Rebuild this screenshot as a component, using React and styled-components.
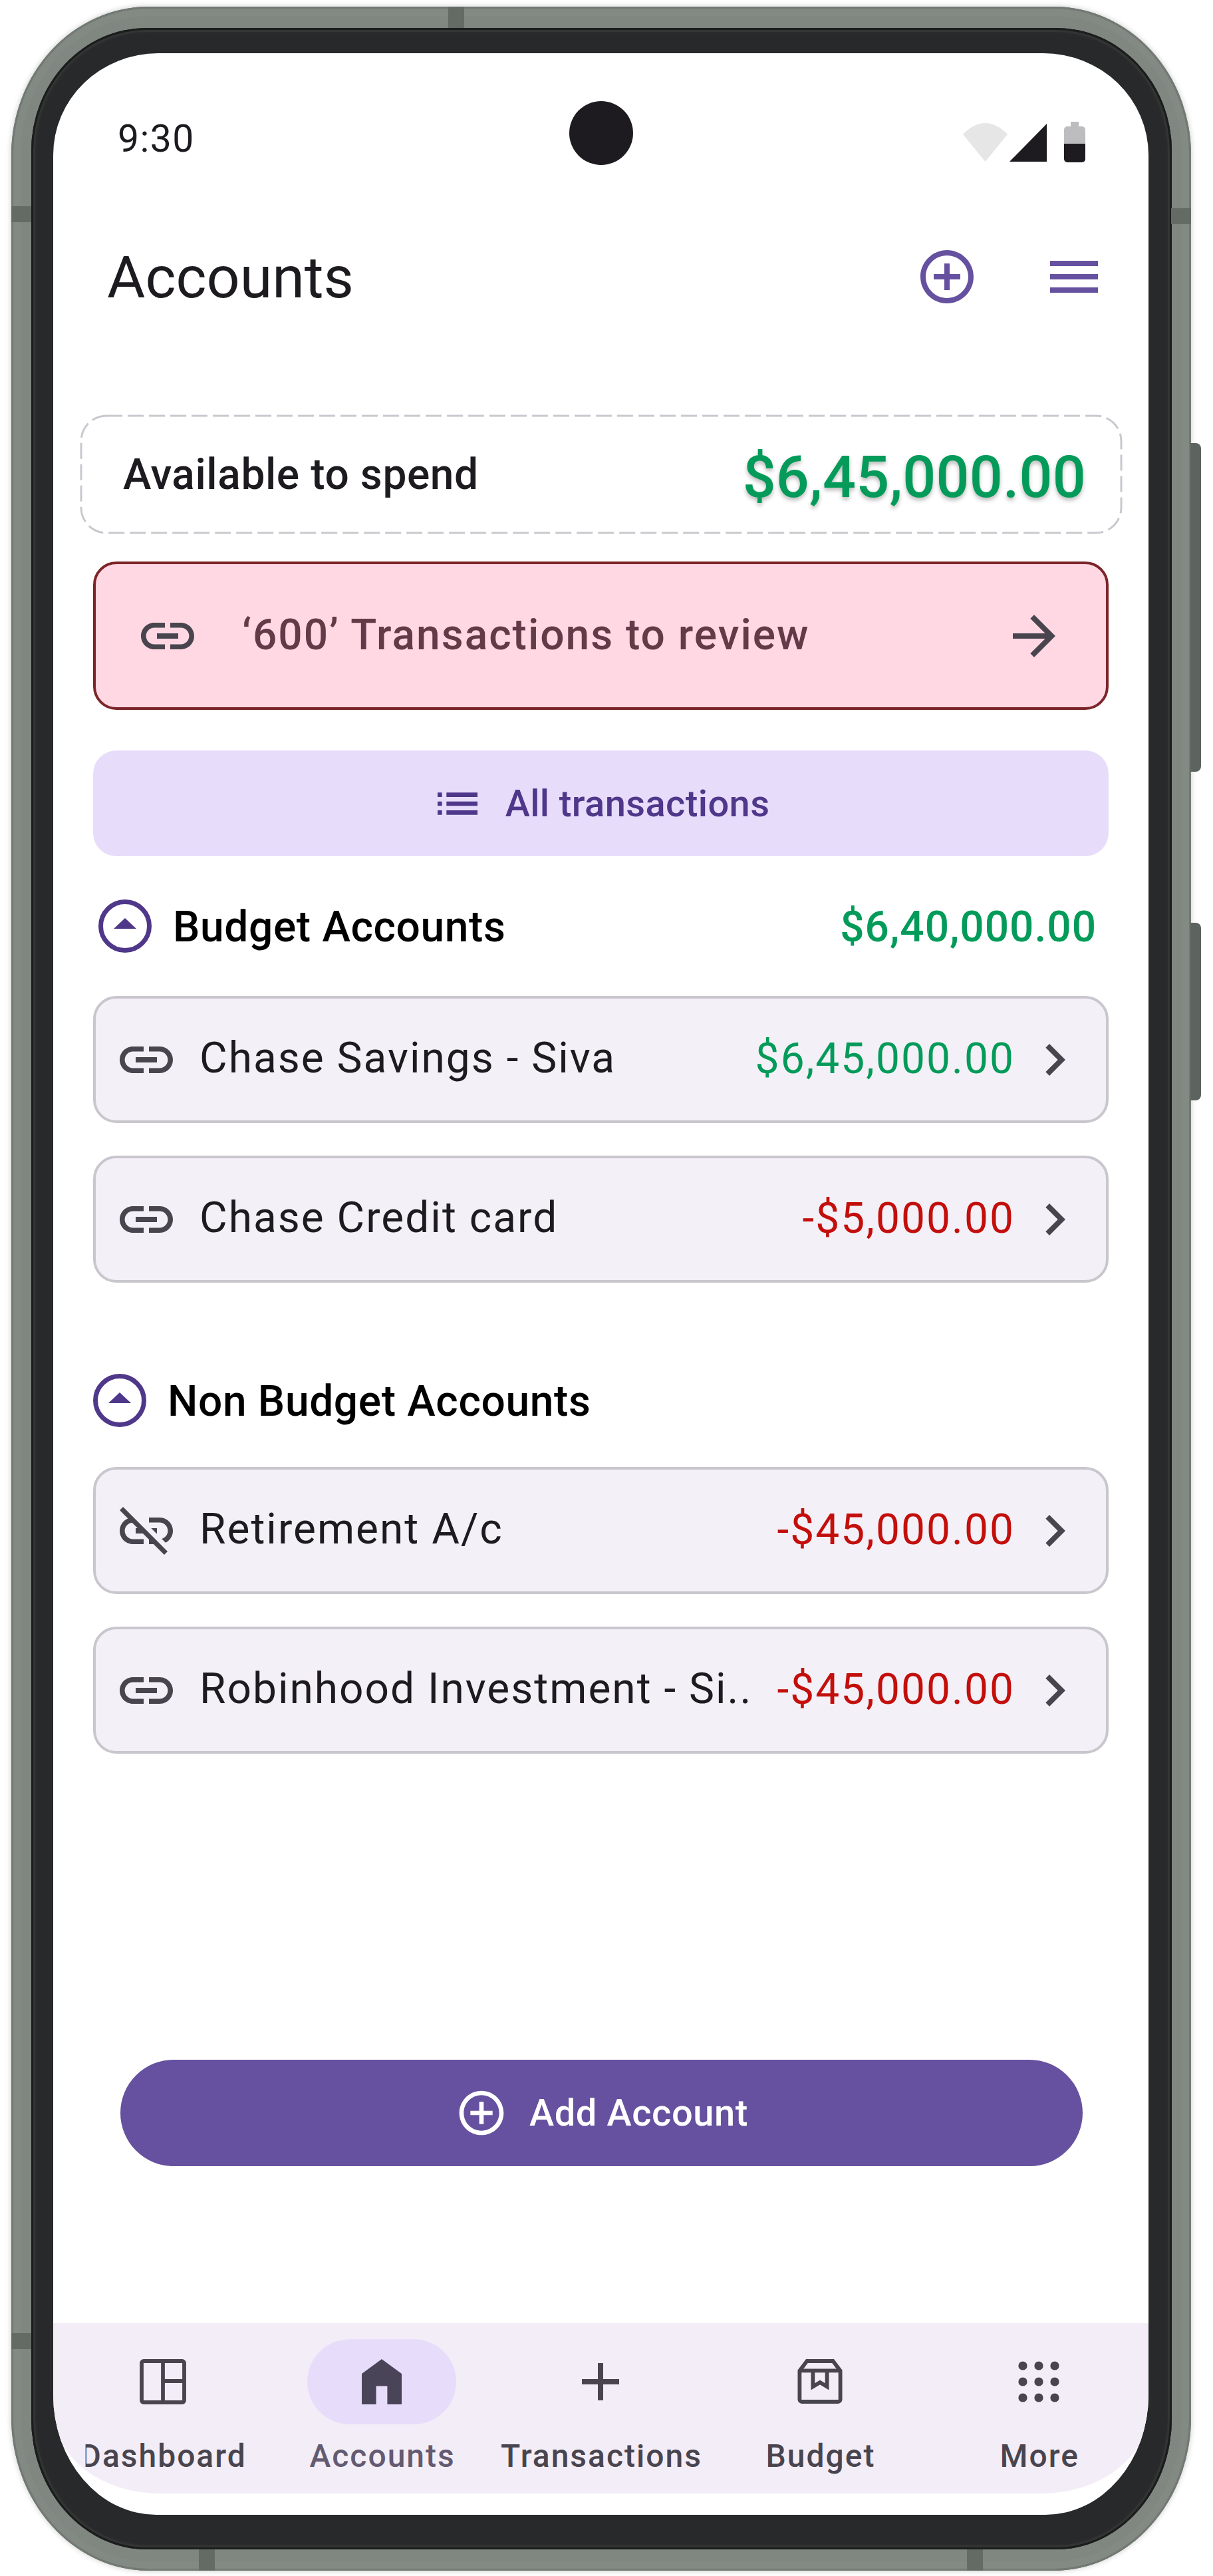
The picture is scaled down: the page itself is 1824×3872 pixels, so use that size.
import React from 'react';
import styled, { createGlobalStyle } from 'styled-components';

const colors = {
  ink: '#1d1b20',
  icon: '#49454f',
  green: '#049b5a',
  red: '#c30f0c',
  primary: '#65519f',
  deepPurple: '#4f378a',
  lilac: '#e7ddfb',
  surface: '#f4f0f7',
  outline: '#c9c6cd',
};

const paths = {
  link: 'M3.9 12c0-1.71 1.39-3.1 3.1-3.1h4V7H7c-2.76 0-5 2.24-5 5s2.24 5 5 5h4v-1.9H7c-1.71 0-3.1-1.39-3.1-3.1zM8 13h8v-2H8v2zm9-6h-4v1.9h4c1.71 0 3.1 1.39 3.1 3.1s-1.39 3.1-3.1 3.1h-4V17h4c2.76 0 5-2.24 5-5s-2.24-5-5-5z',
  linkOff:
    'M17 7h-4v1.9h4c1.71 0 3.1 1.39 3.1 3.1 0 1.43-.98 2.63-2.31 2.98l1.46 1.46C20.88 15.61 22 13.95 22 12c0-2.76-2.24-5-5-5zm-1 4h-2.19l2 2H16zM2 4.27l3.11 3.11C3.29 8.12 2 9.91 2 12c0 2.76 2.24 5 5 5h4v-1.9H7c-1.71 0-3.1-1.39-3.1-3.1 0-1.59 1.21-2.9 2.76-3.07L8.73 11H8v2h2.73L13 15.27V17h1.73l4.01 4L20 19.74 3.27 3 2 4.27z',
  arrow: 'M12 4l-1.41 1.41L16.17 11H4v2h12.17l-5.58 5.59L12 20l8-8z',
  chevron: 'M10 6L8.59 7.41 13.17 12l-4.58 4.59L10 18l6-6z',
  addCircle:
    'M13 7h-2v4H7v2h4v4h2v-4h4v-2h-4V7zm-1-5C6.48 2 2 6.48 2 12s4.48 10 10 10 10-4.48 10-10S17.52 2 12 2zm0 18c-4.41 0-8-3.59-8-8s3.59-8 8-8 8 3.59 8 8-3.59 8-8 8z',
  menu: 'M3 18h18v-2H3v2zm0-5h18v-2H3v2zm0-7v2h18V6H3z',
  list: 'M3 13h2v-2H3v2zm0 4h2v-2H3v2zm0-8h2V7H3v2zm4 4h14v-2H7v2zm0 4h14v-2H7v2zM7 7v2h14V7H7z',
  add: 'M19 13h-6v6h-2v-6H5v-2h6V5h2v6h6v2z',
  home: 'M4.5 20.5V9L12 3.5 19.5 9v11.5h-5.4v-6.9h-4.2v6.9z',
};

const GlobalStyle = createGlobalStyle`
  html, body {
    margin: 0;
    background: #fff;
  }
  * {
    box-sizing: border-box;
  }
  body {
    font-family: Roboto, "Liberation Sans", sans-serif;
    color: ${colors.ink};
  }
`;

const Page = styled.div`
  width: 1824px;
  height: 3872px;
  padding: 10px 33px 8px 17px;
`;

const Phone = styled.div`
  position: relative;
  display: flex;
  height: 100%;
  padding: 32px 29px 32px 30px;
  border-radius: 207px / 223px 223px 231px 231px;
  background: #7f8780;
  box-shadow:
    0 0 8px rgba(0, 0, 0, 0.22),
    inset 0 0 0 3px #727973,
    inset 0 0 0 14px #828a83;
`;

const Seam = styled.span`
  position: absolute;
  background: #646b65;
  ${(p) =>
    p.$edge === 'top' || p.$edge === 'bottom'
      ? `${p.$edge}: 0; left: ${p.$at}px; width: 24px; height: 32px;`
      : `${p.$edge}: 0; top: ${p.$at}px; width: 30px; height: 24px;`}
`;

const SideKey = styled.span`
  position: absolute;
  right: -15px;
  top: ${(p) => p.$top}px;
  width: 16px;
  height: ${(p) => p.$height}px;
  border-radius: 0 8px 8px 0;
  background: #5d635f;
`;

const Bezel = styled.div`
  display: flex;
  flex: 1;
  padding: 38px 35px 52px 33px;
  border-radius: 174px / 185px 185px 197px 197px;
  background: #28292b;
  box-shadow:
    inset 0 0 0 3px #1b1d1c,
    inset 0 0 0 6px #333534,
    inset 0 0 0 9px #2a2b2c;
`;

const Screen = styled.div`
  display: flex;
  flex: 1;
  flex-direction: column;
  overflow: hidden;
  padding-bottom: 32px;
  background: #fff;
  border-radius: 158px 158px 155px 155px / 153px 153px 180px 180px;
`;

const StatusBar = styled.div`
  display: grid;
  grid-template-columns: 1fr 96px 1fr;
  padding: 72px 95px 0;
`;

const Time = styled.span`
  align-self: center;
  margin: 17px 0 0 2px;
  font-size: 57px;
  letter-spacing: 1.5px;
`;

const Camera = styled.span`
  width: 96px;
  height: 96px;
  border-radius: 50%;
  background: ${colors.ink};
`;

const StatusIcons = styled.div`
  display: flex;
  justify-content: flex-end;
  align-items: flex-end;
  align-self: center;
  margin-top: 27px;
`;

const Wifi = styled.svg`
  width: 67px;
  height: 58px;
  margin-bottom: 1px;
`;

const Signal = styled.svg`
  width: 56px;
  height: 57px;
  margin: 0 26px 1px 3px;
`;

const Battery = styled.svg`
  width: 32px;
  height: 61px;
`;

const Header = styled.header`
  display: flex;
  align-items: center;
  height: 100px;
  margin-top: 118px;
  padding: 0 64px 0 81px;
`;

const Title = styled.h1`
  flex: 1;
  margin: 0;
  font-size: 88px;
  font-weight: 400;
`;

const HeaderActions = styled.div`
  display: flex;
  gap: 95px;
`;

const Glyph = styled.svg.attrs({ viewBox: '0 0 24 24' })`
  flex: none;
  width: ${(p) => p.$size || 96}px;
  height: ${(p) => p.$size || 96}px;
  fill: ${(p) => p.$color || colors.icon};
`;

const LineGlyph = styled(Glyph)`
  fill: none;
  stroke: ${colors.icon};
  stroke-width: 1.45;
`;

const Content = styled.main`
  display: flex;
  flex: 1;
  flex-direction: column;
  padding: 0 60px;
`;

const SpendCard = styled.section`
  position: relative;
  display: flex;
  align-items: center;
  justify-content: space-between;
  flex: none;
  height: 180px;
  margin: 157px -21px 0 -20px;
  padding: 0 55px 0 65px;
`;

const DashedOutline = styled.svg`
  position: absolute;
  inset: 0;
  width: 100%;
  height: 100%;
`;

const SpendLabel = styled.span`
  font-size: 64px;
  font-weight: 500;
  letter-spacing: 0.6px;
`;

const SpendAmount = styled.span`
  margin-top: 7px;
  color: ${colors.green};
  font-size: 88px;
  font-weight: 500;
  letter-spacing: 0.2px;
  text-shadow: 0 4px 6px rgba(0, 0, 0, 0.27);
`;

const ReviewBanner = styled.div`
  display: flex;
  align-items: center;
  gap: 63px;
  flex: none;
  height: 223px;
  margin-top: 41px;
  padding: 0 60px;
  border: 4px solid #7c2529;
  border-radius: 35px;
  background: #ffd8e4;
`;

const ReviewText = styled.span`
  flex: 1;
  margin: 0 0 3px 1px;
  color: #633b48;
  font-size: 64px;
  font-weight: 500;
  letter-spacing: 2px;
`;

const AllTransactions = styled.button`
  display: flex;
  align-items: center;
  justify-content: center;
  gap: 32px;
  flex: none;
  height: 159px;
  margin-top: 61px;
  padding: 0 2px 0 0;
  border: 0;
  border-radius: 35px;
  background: ${colors.lilac};
  color: ${colors.deepPurple};
  font: 500 56px Roboto, sans-serif;
  letter-spacing: 0.4px;
`;

const SectionHeader = styled.div`
  display: flex;
  align-items: center;
  gap: 32px;
  flex: none;
  height: 80px;
  margin-top: ${(p) => p.$top}px;
  padding: 0 18px 0 ${(p) => p.$indent}px;
`;

const SectionTitle = styled.h2`
  flex: 1;
  margin: 3px 0 0;
  color: #000;
  font-size: 64px;
  font-weight: 500;
  letter-spacing: 0.65px;
`;

const SectionTotal = styled.span`
  margin-top: 3px;
  color: ${colors.green};
  font-size: 64px;
  font-weight: 500;
  letter-spacing: 1px;
`;

const AccountList = styled.ul`
  display: flex;
  flex-direction: column;
  gap: 49px;
  flex: none;
  margin: ${(p) => p.$top}px 0 0;
  padding: 0;
  list-style: none;
`;

const AccountRow = styled.li`
  display: flex;
  align-items: center;
  height: 191px;
  padding: 0 29px 0 28px;
  border: 4px solid ${colors.outline};
  border-radius: 35px;
  background: ${colors.surface};
`;

const AccountName = styled.span`
  flex: 1;
  margin: 0 0 5px 32px;
  font-size: 64px;
  letter-spacing: 2px;
  white-space: nowrap;
`;

const AccountAmount = styled.span`
  margin: 0 12px 3px 0;
  color: ${(p) => (p.$negative ? colors.red : colors.green)};
  font-size: 64px;
  letter-spacing: 2.05px;
  white-space: nowrap;
`;

const AddButton = styled.button`
  display: flex;
  align-items: center;
  justify-content: center;
  gap: 32px;
  flex: none;
  width: 1447px;
  height: 160px;
  margin: auto 0 236px 41px;
  padding: 0;
  border: 0;
  border-radius: 80px;
  background: ${colors.primary};
  color: #fff;
  font: 500 56px Roboto, sans-serif;
  letter-spacing: 0.6px;
`;

const BottomNav = styled.nav`
  display: grid;
  grid-template-columns: repeat(5, 1fr);
  flex: none;
  height: 256px;
  padding-top: 24px;
  overflow: hidden;
  background: #f3edf7;
  border-radius: 0 0 160px 160px / 0 0 125px 125px;
`;

const NavItem = styled.div`
  display: flex;
  flex-direction: column;
  align-items: center;
`;

const NavPill = styled.span`
  display: flex;
  align-items: center;
  justify-content: center;
  width: 224px;
  height: 128px;
  border-radius: 64px;
  background: ${(p) => (p.$active ? colors.lilac : 'transparent')};
`;

const NavLabel = styled.span`
  margin: 20px 0 0 2px;
  color: ${(p) => (p.$active ? '#625b71' : colors.icon)};
  font-size: 48px;
  font-weight: 500;
  line-height: 56px;
  letter-spacing: 2px;
  clip-path: ${(p) => (p.$cut ? 'inset(0 0 0 8px)' : 'none')};
`;

const CollapseIcon = () => (
  <svg width="80" height="80" viewBox="0 0 80 80" style={{ flex: 'none' }}>
    <circle cx="40" cy="40" r="36.5" fill="none" stroke={colors.deepPurple} strokeWidth="7" />
    <path d="M23 44h34L40 28z" fill={colors.deepPurple} />
  </svg>
);

const budgetAccounts = [
  { name: 'Chase Savings - Siva', amount: '$6,45,000.00' },
  { name: 'Chase Credit card', amount: '-$5,000.00', negative: true },
];

const otherAccounts = [
  { name: 'Retirement A/c', amount: '-$45,000.00', negative: true, unlinked: true },
  { name: 'Robinhood Investment - Si..', amount: '-$45,000.00', negative: true },
];

const Accounts = ({ items, top }) => (
  <AccountList $top={top}>
    {items.map((item) => (
      <AccountRow key={item.name}>
        <Glyph>
          <path d={item.unlinked ? paths.linkOff : paths.link} />
        </Glyph>
        <AccountName>{item.name}</AccountName>
        <AccountAmount $negative={item.negative}>{item.amount}</AccountAmount>
        <Glyph>
          <path d={paths.chevron} />
        </Glyph>
      </AccountRow>
    ))}
  </AccountList>
);

const App = () => {
  return (
    <Page>
      <GlobalStyle />
      <Phone>
        <Seam $edge="top" $at={657} />
        <Seam $edge="bottom" $at={282} />
        <Seam $edge="bottom" $at={1437} />
        <Seam $edge="left" $at={300} />
        <Seam $edge="left" $at={3497} />
        <Seam $edge="right" $at={303} />
        <SideKey $top={656} $height={494} />
        <SideKey $top={1377} $height={267} />

        <Bezel>
          <Screen>
            <StatusBar>
              <Time>9:30</Time>
              <Camera />
              <StatusIcons>
                <Wifi viewBox="0 0 67 58">
                  <path d="M0 17C10 6 22 0 33.5 0S57 6 67 17L33.5 58z" fill="#e6e6e6" />
                </Wifi>
                <Signal viewBox="0 0 56 57">
                  <path d="M56 0v57H0z" fill={colors.ink} />
                </Signal>
                <Battery viewBox="0 0 32 61">
                  <path d="M10 0h12v7h5a5 5 0 0 1 5 5v22H0V12a5 5 0 0 1 5-5h5z" fill="#bdbdbf" />
                  <path d="M0 33h32v23a5 5 0 0 1-5 5H5a5 5 0 0 1-5-5z" fill={colors.ink} />
                </Battery>
              </StatusIcons>
            </StatusBar>

            <Header>
              <Title>Accounts</Title>
              <HeaderActions>
                <Glyph $color={colors.primary}>
                  <path d={paths.addCircle} />
                </Glyph>
                <Glyph $color={colors.primary}>
                  <path d={paths.menu} />
                </Glyph>
              </HeaderActions>
            </Header>

            <Content>
              <SpendCard>
                <DashedOutline viewBox="0 0 1568 180">
                  <rect
                    x="2"
                    y="2"
                    width="1564"
                    height="176"
                    rx="38"
                    fill="none"
                    stroke="#cac8ce"
                    strokeWidth="3"
                    strokeDasharray="24 8"
                  />
                </DashedOutline>
                <SpendLabel>Available to spend</SpendLabel>
                <SpendAmount>$6,45,000.00</SpendAmount>
              </SpendCard>

              <ReviewBanner>
                <Glyph>
                  <path d={paths.link} />
                </Glyph>
                <ReviewText>‘600’ Transactions to review</ReviewText>
                <Glyph>
                  <path d={paths.arrow} />
                </Glyph>
              </ReviewBanner>

              <AllTransactions>
                <Glyph $size={80} $color={colors.deepPurple}>
                  <path d={paths.list} />
                </Glyph>
                All transactions
              </AllTransactions>

              <SectionHeader $top={65} $indent={8}>
                <CollapseIcon />
                <SectionTitle>Budget Accounts</SectionTitle>
                <SectionTotal>$6,40,000.00</SectionTotal>
              </SectionHeader>
              <Accounts items={budgetAccounts} top={65} />

              <SectionHeader $top={137} $indent={0}>
                <CollapseIcon />
                <SectionTitle>Non Budget Accounts</SectionTitle>
              </SectionHeader>
              <Accounts items={otherAccounts} top={60} />

              <AddButton>
                <Glyph $size={80} $color="#fff">
                  <path d={paths.addCircle} />
                </Glyph>
                Add Account
              </AddButton>
            </Content>

            <BottomNav>
              <NavItem>
                <NavPill>
                  <LineGlyph>
                    <rect x="4" y="4.25" width="16" height="15.5" rx="0.75" />
                    <path d="M12 4.25v15.5M12 11.75h8" />
                  </LineGlyph>
                </NavPill>
                <NavLabel $cut>Dashboard</NavLabel>
              </NavItem>
              <NavItem>
                <NavPill $active>
                  <Glyph $color="#4a4459">
                    <path d={paths.home} />
                  </Glyph>
                </NavPill>
                <NavLabel $active>Accounts</NavLabel>
              </NavItem>
              <NavItem>
                <NavPill>
                  <Glyph>
                    <path d={paths.add} />
                  </Glyph>
                </NavPill>
                <NavLabel>Transactions</NavLabel>
              </NavItem>
              <NavItem>
                <NavPill>
                  <LineGlyph>
                    <path d="M7.1 4.25h9.8l2.75 3.6V18.7a.8.8 0 0 1-.8.8H5.15a.8.8 0 0 1-.8-.8V7.85z" />
                    <path d="M4.35 7.85h15.3M9.35 7.85v6l2.65-1.6 2.65 1.6v-6" />
                  </LineGlyph>
                </NavPill>
                <NavLabel>Budget</NavLabel>
              </NavItem>
              <NavItem>
                <NavPill>
                  <Glyph>
                    {[6, 12, 18].map((cy) =>
                      [6, 12, 18].map((cx) => <circle key={`${cx}-${cy}`} cx={cx} cy={cy} r="1.65" />),
                    )}
                  </Glyph>
                </NavPill>
                <NavLabel>More</NavLabel>
              </NavItem>
            </BottomNav>
          </Screen>
        </Bezel>
      </Phone>
    </Page>
  );
};

export default App;
